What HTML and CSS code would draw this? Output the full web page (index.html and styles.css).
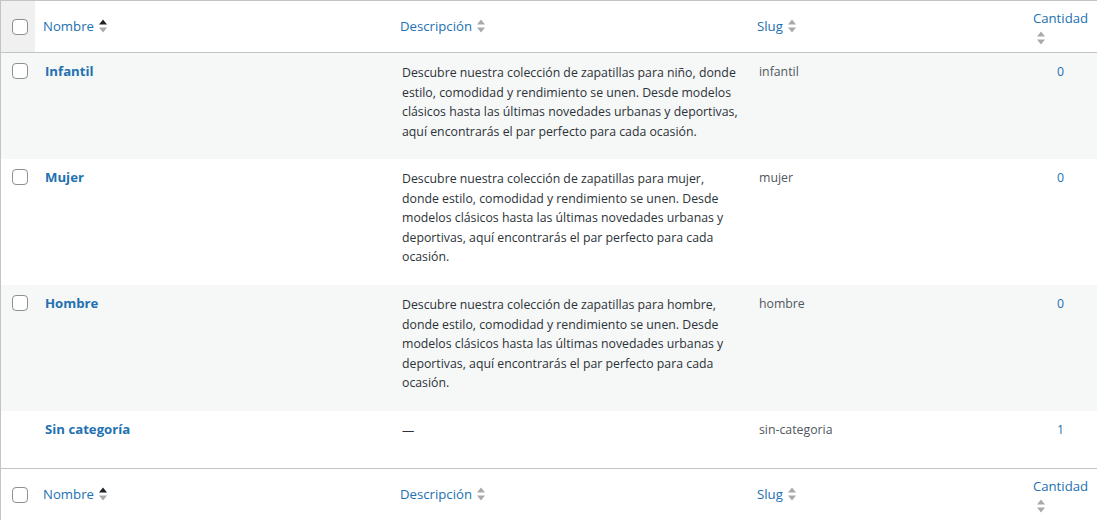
FILE: index.html
```html
<!DOCTYPE html>
<html lang="es">
<head>
<meta charset="utf-8">
<title>Categorías</title>
<link rel="stylesheet" href="styles.css">
</head>
<body>
<table class="list">
  <colgroup>
    <col class="c-cb">
    <col class="c-name">
    <col class="c-desc">
    <col class="c-slug">
    <col class="c-count">
  </colgroup>
  <thead>
    <tr>
      <td class="cb head-cb"><span class="box"></span></td>
      <th class="sort"><a href="#">Nombre <span class="ind"><svg width="10" height="16" viewBox="0 0 10 16"><path d="M1 6.5 5 1.5 9 6.5Z" fill="#1d2327"/><path d="M1 9.5 5 14.5 9 9.5Z" fill="#a7aaad"/></svg></span></a></th>
      <th class="sort"><a href="#">Descripción <span class="ind"><svg width="10" height="16" viewBox="0 0 10 16"><path d="M1 6.5 5 1.5 9 6.5Z" fill="#a7aaad"/><path d="M1 9.5 5 14.5 9 9.5Z" fill="#a7aaad"/></svg></span></a></th>
      <th class="sort"><a href="#">Slug <span class="ind"><svg width="10" height="16" viewBox="0 0 10 16"><path d="M1 6.5 5 1.5 9 6.5Z" fill="#a7aaad"/><path d="M1 9.5 5 14.5 9 9.5Z" fill="#a7aaad"/></svg></span></a></th>
      <th class="sort num"><a href="#">Cantidad <span class="ind"><svg width="10" height="16" viewBox="0 0 10 16"><path d="M1 6.5 5 1.5 9 6.5Z" fill="#a7aaad"/><path d="M1 9.5 5 14.5 9 9.5Z" fill="#a7aaad"/></svg></span></a></th>
    </tr>
  </thead>
  <tbody>
    <tr class="alt">
      <td class="cb"><span class="box"></span></td>
      <td class="name"><a href="#">Infantil</a><div class="actions"></div></td>
      <td class="desc"><p>Descubre nuestra colección de zapatillas para niño, donde estilo, comodidad y rendimiento se unen. Desde modelos clásicos hasta las últimas novedades urbanas y deportivas, aquí encontrarás el par perfecto para cada ocasión.</p></td>
      <td class="slug">infantil</td>
      <td class="count"><a href="#">0</a></td>
    </tr>
    <tr>
      <td class="cb"><span class="box"></span></td>
      <td class="name"><a href="#">Mujer</a><div class="actions"></div></td>
      <td class="desc"><p>Descubre nuestra colección de zapatillas para mujer, donde estilo, comodidad y rendimiento se unen. Desde modelos clásicos hasta las últimas novedades urbanas y deportivas, aquí encontrarás el par perfecto para cada ocasión.</p></td>
      <td class="slug">mujer</td>
      <td class="count"><a href="#">0</a></td>
    </tr>
    <tr class="alt">
      <td class="cb"><span class="box"></span></td>
      <td class="name"><a href="#">Hombre</a><div class="actions"></div></td>
      <td class="desc"><p>Descubre nuestra colección de zapatillas para hombre, donde estilo, comodidad y rendimiento se unen. Desde modelos clásicos hasta las últimas novedades urbanas y deportivas, aquí encontrarás el par perfecto para cada ocasión.</p></td>
      <td class="slug">hombre</td>
      <td class="count"><a href="#">0</a></td>
    </tr>
    <tr>
      <td class="cb"></td>
      <td class="name"><a href="#">Sin categoría</a><div class="actions"></div></td>
      <td class="desc dash">—</td>
      <td class="slug">sin-categoria</td>
      <td class="count"><a href="#">1</a></td>
    </tr>
  </tbody>
  <tfoot>
    <tr>
      <td class="cb"><span class="box"></span></td>
      <th class="sort"><a href="#">Nombre <span class="ind"><svg width="10" height="16" viewBox="0 0 10 16"><path d="M1 6.5 5 1.5 9 6.5Z" fill="#1d2327"/><path d="M1 9.5 5 14.5 9 9.5Z" fill="#a7aaad"/></svg></span></a></th>
      <th class="sort"><a href="#">Descripción <span class="ind"><svg width="10" height="16" viewBox="0 0 10 16"><path d="M1 6.5 5 1.5 9 6.5Z" fill="#a7aaad"/><path d="M1 9.5 5 14.5 9 9.5Z" fill="#a7aaad"/></svg></span></a></th>
      <th class="sort"><a href="#">Slug <span class="ind"><svg width="10" height="16" viewBox="0 0 10 16"><path d="M1 6.5 5 1.5 9 6.5Z" fill="#a7aaad"/><path d="M1 9.5 5 14.5 9 9.5Z" fill="#a7aaad"/></svg></span></a></th>
      <th class="sort num"><a href="#">Cantidad <span class="ind"><svg width="10" height="16" viewBox="0 0 10 16"><path d="M1 6.5 5 1.5 9 6.5Z" fill="#a7aaad"/><path d="M1 9.5 5 14.5 9 9.5Z" fill="#a7aaad"/></svg></span></a></th>
    </tr>
  </tfoot>
</table>
</body>
</html>
```

FILE: styles.css
```css
html, body {
  margin: 0;
  padding: 0;
  background: #fff;
  overflow: hidden;
}
body {
  font-family: "Open Sans", "Noto Sans", sans-serif;
  font-size: 12.3px;
  color: #3c434a;
}
a {
  color: #2271b1;
  text-decoration: none;
}
.list {
  table-layout: fixed;
  border-collapse: separate;
  border-spacing: 0;
  width: 1098px;
  border: 1px solid #c3c4c7;
  border-right: 0;
  border-bottom: 0;
}
.c-cb { width: 34px; }
.c-name { width: 357px; }
.c-desc { width: 357px; }
.c-slug { width: 274px; }
.c-count { width: 75px; }

thead th, thead td {
  border-bottom: 1px solid #c3c4c7;
}
tfoot th, tfoot td {
  border-top: 1px solid #c3c4c7;
}
th, td {
  padding: 0;
  text-align: left;
  font-weight: 400;
}
thead tr, tfoot tr {
  height: 51px;
}
th.sort {
  vertical-align: middle;
  font-size: 13.2px;
  line-height: 19px;
}
th.sort a {
  display: block;
  padding: 8px;
}
.ind {
  display: inline-block;
  width: 10px;
  height: 16px;
  vertical-align: -3px;
  margin-left: 1px;
}
.ind svg { display: block; }
th.num {
  text-align: center;
  vertical-align: top;
}
th.num a {
  padding: 8px 6px 6px;
}
th.num .ind {
  display: block;
  margin: 2px 0 0 7px;
}
td.cb {
  vertical-align: top;
  padding: 10px 0 0 11px;
}
thead td.cb, tfoot td.cb {
  vertical-align: middle;
  padding-top: 0;
  padding-bottom: 0;
}
.head-cb {
  background: #f0f0f1;
}
.box {
  display: block;
  width: 16px;
  height: 16px;
  box-sizing: border-box;
  border: 1px solid #8c8f94;
  border-radius: 4px;
  background: #fff;
}
tbody td {
  vertical-align: top;
}
tbody tr.alt td {
  background: #f6f7f7;
}
td.name {
  padding: 9px 10px 7px;
  font-size: 13.2px;
  line-height: 19.5px;
}
td.name a {
  font-weight: 700;
}
.actions {
  height: 21.5px;
}
td.desc {
  padding: 8px 10px;
}
td.desc p {
  margin: 2px 0 10.4px;
  line-height: 19.5px;
  color: #2c3338;
}
td.dash {
  padding-top: 10px;
  line-height: 19.5px;
  color: #2c3338;
}
td.slug {
  padding: 9px 10px 8px;
  line-height: 19.5px;
  color: #50575e;
}
td.count {
  padding: 9px 10px 8px;
  text-align: center;
  line-height: 19.5px;
}
```
